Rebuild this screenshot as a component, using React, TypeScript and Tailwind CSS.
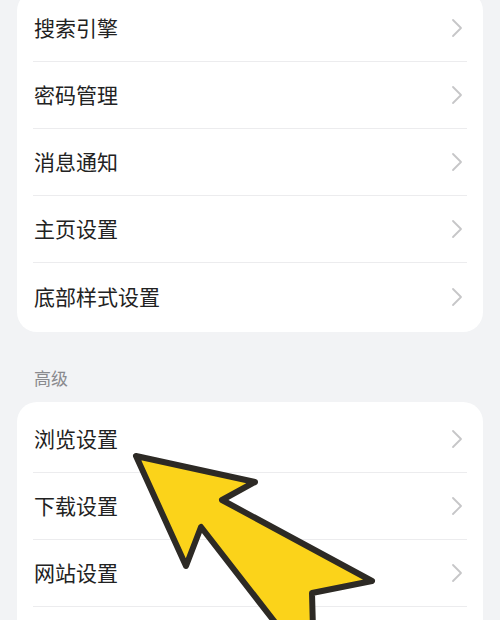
const generalItems = ['搜索引擎', '密码管理', '消息通知', '主页设置', '底部样式设置'];
const advancedItems = ['浏览设置', '下载设置', '网站设置'];

const font = { fontFamily: '"Noto Sans CJK SC", "Noto Sans", sans-serif' };

function Chevron() {
  return (
    <svg width="12" height="20" viewBox="0 0 12 20" className="mr-[4px]">
      <polyline
        points="2,2 10,10 2,18"
        fill="none"
        stroke="#c6c6c8"
        strokeWidth="1.8"
        strokeLinecap="round"
        strokeLinejoin="round"
      />
    </svg>
  );
}

function Row({ label, last }: { label: string; last?: boolean }) {
  return (
    <div
      className={`mx-4 flex h-[67px] items-center justify-between ${
        last ? '' : 'border-b border-[#ececee]'
      }`}
    >
      <span className="pl-[1px] text-[21px] text-[#222222]" style={font}>
        {label}
      </span>
      <Chevron />
    </div>
  );
}

export default function App() {
  return (
    <div className="relative h-[620px] w-[500px] overflow-hidden bg-[#f2f3f5]">
      {/* 常规 */}
      <div className="mx-[17px] -mt-[9px] rounded-[20px] bg-white pt-1 pb-[2px]">
        {generalItems.map((item, i) => (
          <Row key={item} label={item} last={i === generalItems.length - 1} />
        ))}
      </div>

      <div className="px-[34px] pt-[34px] pb-[12px] text-[17px] leading-[24px] text-[#8a8a8e]" style={font}>
        高级
      </div>

      {/* 高级 */}
      <div className="mx-[17px] h-[240px] rounded-[20px] bg-white pt-1">
        {advancedItems.map((item) => (
          <Row key={item} label={item} />
        ))}
      </div>

      {/* 指示箭头 */}
      <svg
        className="pointer-events-none absolute inset-0"
        width="500"
        height="620"
        viewBox="0 0 500 620"
      >
        <polygon
          points="136,456 255,482 222,500 372,581 312,593 313,630 281,630 201,527 186,566"
          fill="#fbd31a"
          stroke="#2d2a25"
          strokeWidth="6"
          strokeLinejoin="round"
        />
      </svg>
    </div>
  );
}
